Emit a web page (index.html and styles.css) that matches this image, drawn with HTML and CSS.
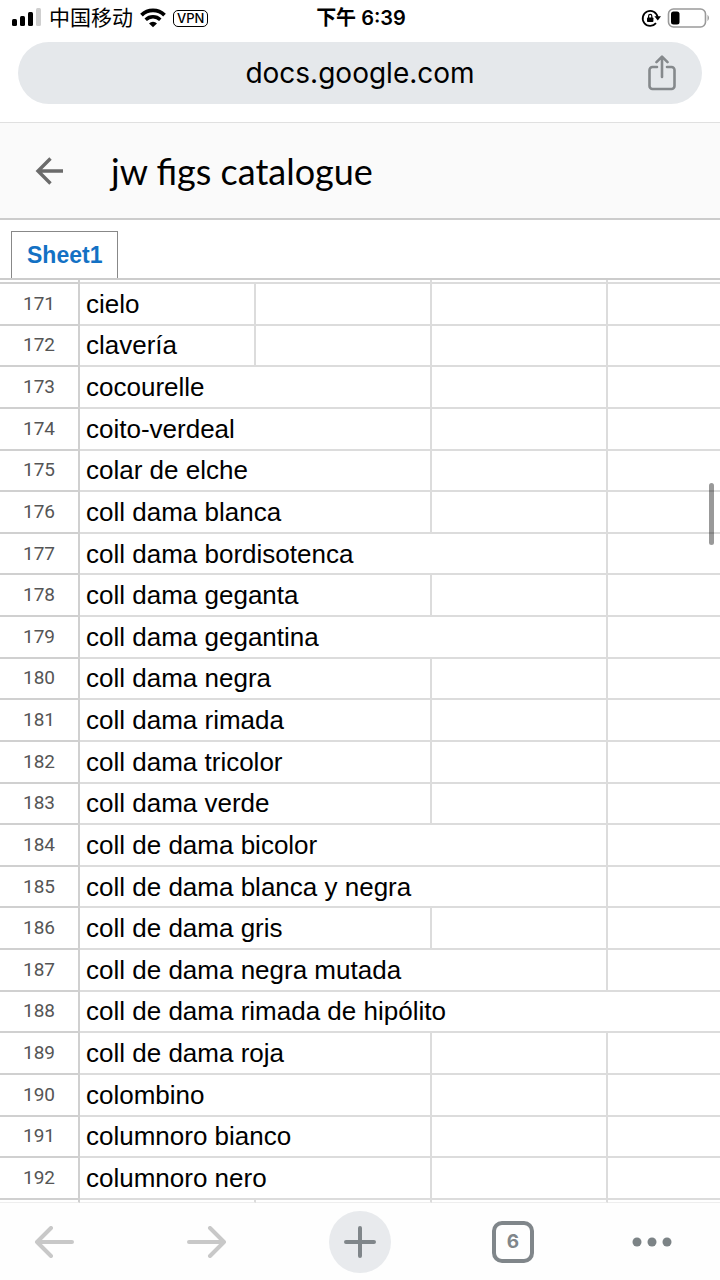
FILE: index.html
```html
<!DOCTYPE html>
<html lang="en">
<head>
  <meta charset="UTF-8">
  <meta name="viewport" content="width=device-width, initial-scale=1">
  <title>jw figs catalogue</title>
  <link rel="stylesheet" href="styles.css">
</head>
<body>
  <div class="status-bar">
    <div class="status-left">
      <svg class="signal" width="30" height="20" viewBox="0 0 30 20">
        <rect x="0" y="12" width="5" height="7" rx="1.5"/>
        <rect x="8" y="9" width="5" height="10" rx="1.5"/>
        <rect x="16" y="5" width="5" height="14" rx="1.5"/>
        <rect x="24" y="1" width="5" height="18" rx="1.5" fill="#cfcfcf"/>
      </svg>
      <span class="carrier" lang="zh-CN">中国移动</span>
      <svg class="wifi" width="26" height="20" viewBox="0 0 26 20">
        <path d="M1.5 7.2A16.3 16.3 0 0 1 24.5 7.2" fill="none" stroke="#000" stroke-width="3.8"/>
        <path d="M5.7 11.8A10.4 10.4 0 0 1 20.3 11.8" fill="none" stroke="#000" stroke-width="3.4"/>
        <path d="M13 19.2L9 15.4A5.7 5.7 0 0 1 17 15.4Z"/>
      </svg>
      <span class="vpn">VPN</span>
    </div>
    <div class="clock" lang="zh-CN">下午 6:39</div>
    <div class="status-right">
      <svg width="20" height="20" viewBox="0 0 20 20">
        <path d="M15 15.2A7.5 7.500 0 1 1 16.600 9" fill="none" stroke="#000" stroke-width="1.8"/>
        <path d="M13.400 8.300H20L16.800 12.500Z"/>
        <rect x="6" y="9.500" width="6.400" height="4.500" rx="0.8"/>
        <path d="M7.600 10V8A1.600 1.600 0 0 1 10.800 8V10" fill="none" stroke="#000" stroke-width="1.2"/>
      </svg>
      <svg width="43" height="20" viewBox="0 0 43 20">
        <rect x="1.500" y="1" width="37" height="18" rx="5" fill="none" stroke="#9a9a9a" stroke-width="1.6"/>
        <rect x="4" y="3.500" width="8.500" height="13" rx="2.5"/>
        <path d="M40.5 6.800Q43.500 10 40.5 13.200Z" fill="#9a9a9a"/>
      </svg>
    </div>
  </div>

  <div class="address-bar">
    <input type="text" class="address" aria-label="Address" value="docs.google.com">
    <button type="button" class="share" aria-label="Share">
      <svg width="28" height="36" viewBox="0 0 28 36" fill="none" stroke="#85898c" stroke-width="2.6" stroke-linecap="round" stroke-linejoin="round">
        <path d="M9 12H4.5A3 3 0 0 0 1.5 15V31A3 3 0 0 0 4.5 34H23.5A3 3 0 0 0 26.5 31V15A3 3 0 0 0 23.5 12H19"/>
        <path d="M14 22V2M8.5 7.2L14 1.7L19.5 7.2"/>
      </svg>
    </button>
  </div>

  <header class="doc-header">
    <button type="button" class="back" aria-label="Back to documents">
      <svg width="28" height="28" viewBox="0 0 28 28" fill="none" stroke="#6b6b6b" stroke-width="3.4">
        <path d="M28 14H3M15.5 1.5L3 14L15.5 26.5"/>
      </svg>
    </button>
    <h1>jw figs catalogue</h1>
  </header>

  <nav class="sheet-tabs">
    <a href="#sheet1" class="tab">Sheet1</a>
  </nav>

  <main class="sheet" id="sheet1">
    <table>
      <colgroup>
        <col class="col-num">
        <col class="col-cell">
        <col class="col-cell">
        <col class="col-cell">
        <col>
      </colgroup>
      <tbody>
        <tr class="clipped"><th></th><td colspan="2"></td><td></td><td></td></tr>
        <tr><th>171</th><td>cielo</td><td></td><td></td><td></td></tr>
        <tr><th>172</th><td>clavería</td><td></td><td></td><td></td></tr>
        <tr><th>173</th><td colspan="2">cocourelle</td><td></td><td></td></tr>
        <tr><th>174</th><td colspan="2">coito-verdeal</td><td></td><td></td></tr>
        <tr><th>175</th><td colspan="2">colar de elche</td><td></td><td></td></tr>
        <tr><th>176</th><td colspan="2">coll dama blanca</td><td></td><td></td></tr>
        <tr><th>177</th><td colspan="3">coll dama bordisotenca</td><td></td></tr>
        <tr><th>178</th><td colspan="2">coll dama geganta</td><td></td><td></td></tr>
        <tr><th>179</th><td colspan="3">coll dama gegantina</td><td></td></tr>
        <tr><th>180</th><td colspan="2">coll dama negra</td><td></td><td></td></tr>
        <tr><th>181</th><td colspan="2">coll dama rimada</td><td></td><td></td></tr>
        <tr><th>182</th><td colspan="2">coll dama tricolor</td><td></td><td></td></tr>
        <tr><th>183</th><td colspan="2">coll dama verde</td><td></td><td></td></tr>
        <tr><th>184</th><td colspan="3">coll de dama bicolor</td><td></td></tr>
        <tr><th>185</th><td colspan="3">coll de dama blanca y negra</td><td></td></tr>
        <tr><th>186</th><td colspan="2">coll de dama gris</td><td></td><td></td></tr>
        <tr><th>187</th><td colspan="3">coll de dama negra mutada</td><td></td></tr>
        <tr><th>188</th><td colspan="4">coll de dama rimada de hipólito</td></tr>
        <tr><th>189</th><td colspan="2">coll de dama roja</td><td></td><td></td></tr>
        <tr><th>190</th><td colspan="2">colombino</td><td></td><td></td></tr>
        <tr><th>191</th><td colspan="2">columnoro bianco</td><td></td><td></td></tr>
        <tr><th>192</th><td colspan="2">columnoro nero</td><td></td><td></td></tr>
        <tr class="clipped last"><th></th><td></td><td></td><td></td><td></td></tr>
      </tbody>
    </table>
    <div class="scroll-thumb"></div>
  </main>

  <footer class="toolbar">
    <button type="button" aria-label="Back">
      <svg width="40" height="32" viewBox="0 0 40 32" fill="none" stroke="#c8c8c8" stroke-width="4" stroke-linecap="round" stroke-linejoin="round">
        <path d="M38 16H3M17 2L3 16L17 30"/>
      </svg>
    </button>
    <button type="button" aria-label="Forward">
      <svg width="40" height="32" viewBox="0 0 40 32" fill="none" stroke="#c8c8c8" stroke-width="4" stroke-linecap="round" stroke-linejoin="round">
        <path d="M2 16H37M23 2L37 16L23 30"/>
      </svg>
    </button>
    <button type="button" aria-label="New tab">
      <span class="new-tab">
        <svg width="32" height="32" viewBox="0 0 32 32" fill="none" stroke="#80868a" stroke-width="4" stroke-linecap="round">
          <path d="M2 16H30M16 2V30"/>
        </svg>
      </span>
    </button>
    <button type="button" aria-label="Show 6 tabs"><span class="tab-count">6</span></button>
    <button type="button" class="more" aria-label="Menu">
      <svg width="40" height="10" viewBox="0 0 40 10" fill="#7c8386">
        <circle cx="5" cy="5" r="4.5"/>
        <circle cx="20" cy="5" r="4.5"/>
        <circle cx="35" cy="5" r="4.5"/>
      </svg>
    </button>
  </footer>
</body>
</html>
```

FILE: styles.css
```css
* { box-sizing: border-box; }
body {
  margin: 0;
  height: 100vh;
  display: flex;
  flex-direction: column;
  background-color: #fff;
  color: #000;
  font-family: "Liberation Sans", Arial, sans-serif;
}
button {
  display: flex;
  align-items: center;
  justify-content: center;
  padding: 0;
  border: none;
  background: none;
  cursor: pointer;
}
svg {
  display: block;
  flex: none;
}

/* phone status bar */
.status-bar {
  display: grid;
  grid-template-columns: 1fr auto 1fr;
  align-items: center;
  height: 36px;
  padding: 0 10px 0 12px;
  font-family: Inter, "Noto Sans CJK SC", sans-serif;
  font-size: 20px;
  line-height: 24px;
}
.status-left {
  display: flex;
  align-items: center;
  gap: 7px;
}
.signal {
  margin-bottom: 2px;
}
.carrier {
  font-size: 21px;
}
.vpn {
  padding: 0 3px;
  border: 1px solid #000;
  border-radius: 5px;
  font-size: 13px;
  font-weight: 500;
  line-height: 15px;
}
.clock {
  font-weight: 600;
}
.status-right {
  display: flex;
  align-items: center;
  justify-content: flex-end;
  gap: 6px;
}

.address-bar {
  display: flex;
  align-items: center;
  height: 62px;
  margin: 6px 18px 18px;
  padding: 0 24px 0 56px;
  border-radius: 31px;
  background-color: #e5e8eb;
}
.address {
  flex: 1;
  min-width: 0;
  padding: 0;
  border: none;
  outline: none;
  background: none;
  color: #000;
  font-family: Inter, sans-serif;
  font-size: 28px;
  text-align: center;
}
.share {
  width: 32px;
}

.doc-header {
  display: flex;
  align-items: center;
  height: 98px;
  padding: 0 35px;
  gap: 48px;
  border-top: 1px solid #e0e0e0;
  border-bottom: 2px solid #ccc;
  background-color: #fafafa;
}
.doc-header h1 {
  margin: 0;
  font-family: Lato, sans-serif;
  font-size: 36px;
  font-weight: 400;
  line-height: 44px;
}

.sheet-tabs {
  display: flex;
  padding: 11px 11px 0;
  border-bottom: 2px solid #ccc;
}
.tab {
  padding: 0 15px;
  border: 1px solid #888;
  border-bottom: none;
  color: #1371c4;
  font-size: 23px;
  font-weight: bold;
  line-height: 46px;
  text-decoration: none;
}

/* grid */
.sheet {
  position: relative;
  flex: 1;
  min-height: 0;
  overflow: hidden;
}
table {
  width: 100%;
  height: 100%;
  table-layout: fixed;
  border-collapse: separate;
  border-spacing: 0;
}
.col-num { width: 80px; }
.col-cell { width: 176px; }
th, td {
  padding: 0;
  border-right: 2px solid #dcdcdc;
  border-bottom: 2px solid #dcdcdc;
  white-space: nowrap;
}
th {
  border-color: #d0d0d0;
  color: #555;
  font-family: Roboto, sans-serif;
  font-size: 19px;
  font-weight: 400;
  line-height: 24px;
}
td {
  padding-left: 6px;
  font-size: 26px;
  line-height: 32px;
}
td:last-child {
  border-right: none;
}
.clipped { height: 4px; }
.clipped.last { height: 3px; }
.clipped.last th, .clipped.last td { border-bottom: 1px solid #eee; }
.clipped th, .clipped td { line-height: 0; }
.scroll-thumb {
  position: absolute;
  top: 22%;
  right: 6px;
  width: 5px;
  height: 62px;
  border-radius: 3px;
  background-color: rgba(0, 0, 0, 0.4);
}

/* browser toolbar */
.toolbar {
  display: flex;
  align-items: center;
  justify-content: space-between;
  height: 77px;
  padding: 0 16px;
  background-color: #fefefe;
}
.toolbar button {
  width: 76px;
  height: 62px;
}
.toolbar .more {
  justify-content: flex-start;
  padding-left: 4px;
}
.new-tab {
  display: grid;
  place-items: center;
  width: 62px;
  height: 62px;
  border-radius: 50%;
  background-color: #e8eaed;
}
.tab-count {
  width: 42px;
  height: 42px;
  border: 4px solid #80868a;
  border-radius: 10px;
  color: #80868a;
  font-family: Inter, sans-serif;
  font-size: 19px;
  font-weight: 700;
  line-height: 34px;
}
```
